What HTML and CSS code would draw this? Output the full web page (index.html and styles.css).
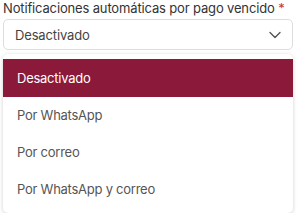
FILE: index.html
```html
<!DOCTYPE html>
<html lang="es">
<head>
    <meta charset="UTF-8">
    <meta name="viewport" content="width=device-width, initial-scale=1.0">
    <title>Notificaciones</title>
    <link rel="stylesheet" href="styles.css">
</head>
<body>
    <div class="form-group">
        <label for="notif">Notificaciones automáticas por pago vencido <span class="required">*</span></label>
        <div class="select" id="notif">
            <span class="select-value">Desactivado</span>
            <svg class="chevron" width="12" height="8" viewBox="0 0 12 8">
                <path d="M1 1.5 L6 6.5 L11 1.5" fill="none" stroke="#555" stroke-width="1.4" stroke-linecap="round" stroke-linejoin="round"/>
            </svg>
        </div>
        <ul class="options">
            <li class="option selected">Desactivado</li>
            <li class="option">Por WhatsApp</li>
            <li class="option">Por correo</li>
            <li class="option">Por WhatsApp y correo</li>
        </ul>
    </div>
</body>
</html>
```

FILE: styles.css
```css
body {
    font-family: Inter, "Noto Sans", Arial, sans-serif;
    background-color: white;
    margin: 0;
    padding: 0 4px 0 3px;
}
.form-group label {
    display: block;
    font-size: 13px;
    line-height: 17px;
    letter-spacing: -0.15px;
    color: #333;
    margin-bottom: 2px;
}
.required {
    color: #d32f2f;
}
.select {
    display: flex;
    align-items: center;
    justify-content: space-between;
    height: 29px;
    padding: 0 11px 0 11px;
    border: 1px solid #ddd;
    border-radius: 5px;
    font-size: 13px;
    letter-spacing: -0.15px;
    color: #444;
}
.options {
    list-style: none;
    margin: 4px 0 0 0;
    padding: 5px 0;
    border-radius: 5px;
    background-color: white;
    box-shadow: 0 1px 4px rgba(0,0,0,0.18);
}
.option {
    height: 37px;
    line-height: 37px;
    padding: 0 14px;
    font-size: 13px;
    letter-spacing: -0.25px;
    color: #555;
}
.option.selected {
    height: 38px;
    line-height: 38px;
    background-color: #8b1a3a;
    color: white;
}
```
